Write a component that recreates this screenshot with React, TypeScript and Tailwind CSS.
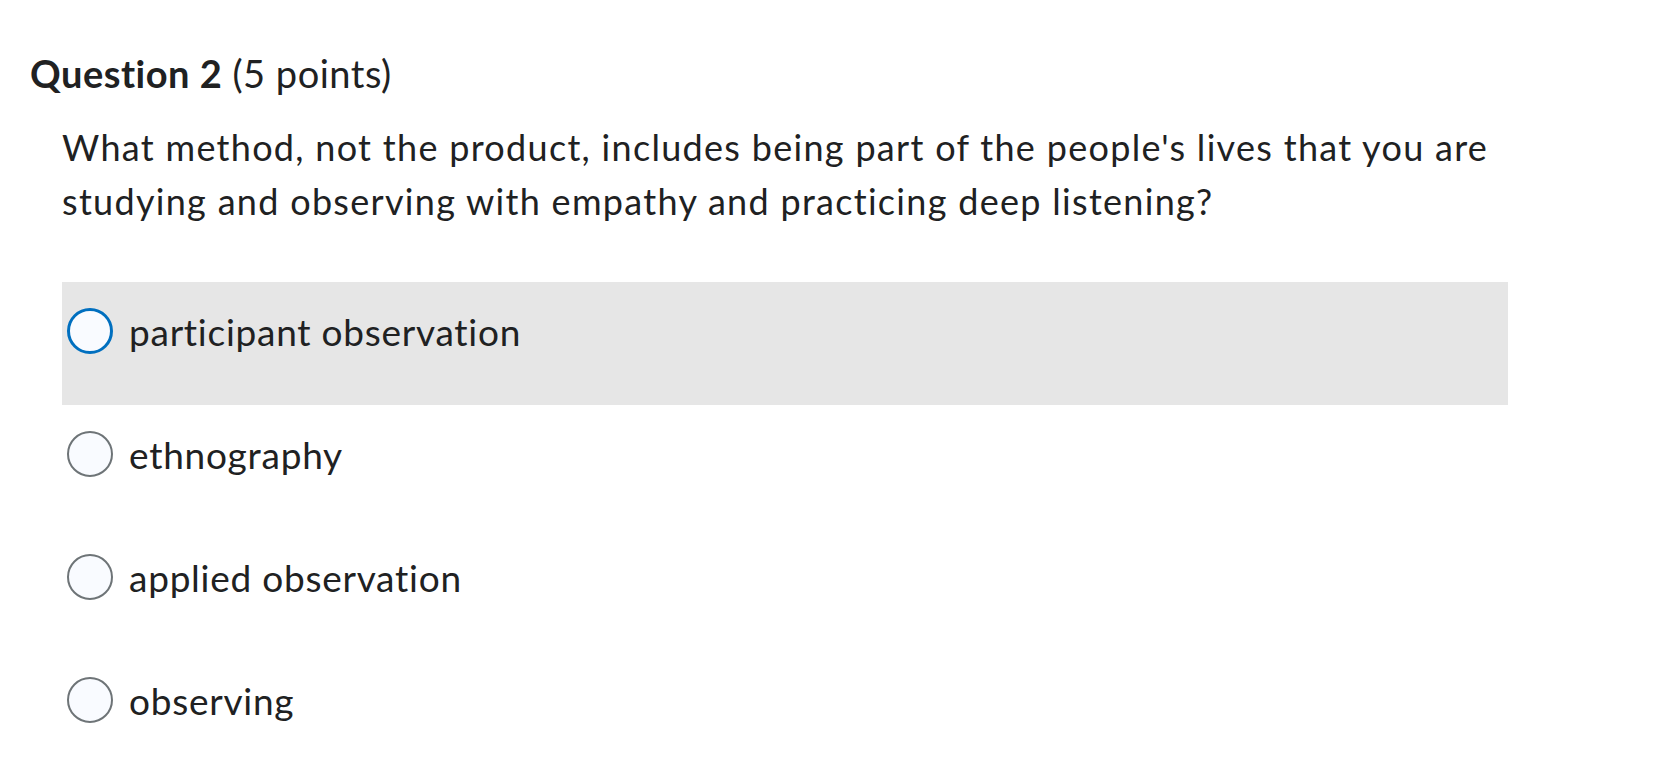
import React from 'react';

const options = [
  { label: 'participant observation', focused: true },
  { label: 'ethnography', focused: false },
  { label: 'applied observation', focused: false },
  { label: 'observing', focused: false },
];

const Radio: React.FC<{ focused: boolean }> = ({ focused }) => (
  <span
    className={
      'block w-[46px] h-[46px] shrink-0 rounded-full bg-[#f9fbff] ' +
      (focused ? 'border-[3px] border-[#006fbf]' : 'border-2 border-[#6e7477]')
    }
  />
);

export default function App() {
  return (
    <div className="min-h-[775px] bg-white text-[#202122] font-['Lato','Noto_Sans',sans-serif] [font-variant-ligatures:none] pt-[50px] pl-[30px]">
      <h2 className="text-[38px] leading-[46px] tracking-[0.5px]">
        <span className="font-bold">Question 2</span> (5 points)
      </h2>

      <div className="pl-[32px] pr-[146px] mt-[24px]">
        <p className="text-[36px] leading-[54px] tracking-[1.3px]">
          What method, not the product, includes being part of the people's lives that you are studying and observing
          with empathy and practicing deep listening?
        </p>

        <div className="mt-[54px] flex flex-col">
          {options.map((o) => (
            <label
              key={o.label}
              className={'flex items-start h-[123px] pl-[5px] pt-[26px] ' + (o.focused ? 'bg-[#e6e6e6]' : '')}
            >
              <Radio focused={o.focused} />
              <span className="ml-[16px] text-[37px] leading-[48px] tracking-[0.75px]">{o.label}</span>
            </label>
          ))}
        </div>
      </div>
    </div>
  );
}
